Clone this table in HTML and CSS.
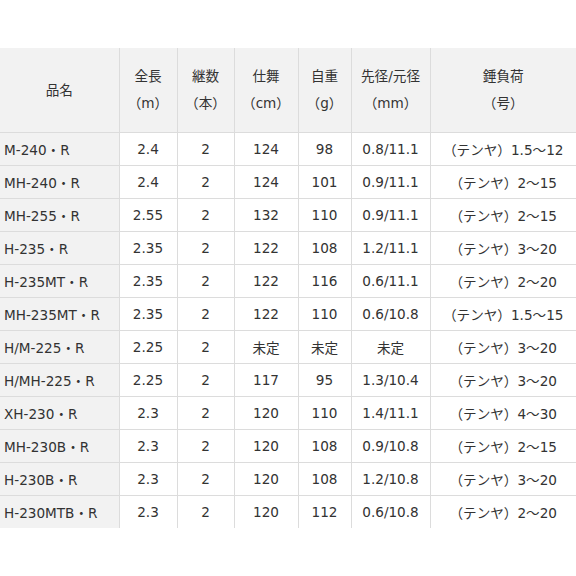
FILE: index.html
```html
<!DOCTYPE html>
<html lang="ja">
<head>
<meta charset="utf-8">
<link rel="stylesheet" href="styles.css">
</head>
<body>
<div class="wrap">
<table class="spec">
<colgroup>
<col class="c1"><col class="c2"><col class="c3"><col class="c4"><col class="c5"><col class="c6"><col class="c7">
</colgroup>
<thead>
<tr>
<th>品名</th>
<th>全長<br>（m）</th>
<th>継数<br>（本）</th>
<th>仕舞<br>（cm）</th>
<th>自重<br>（g）</th>
<th>先径/元径<br>（mm）</th>
<th>錘負荷<br>（号）</th>
</tr>
</thead>
<tbody>
<tr><td class="name">M-240・R</td><td>2.4</td><td>2</td><td>124</td><td>98</td><td>0.8/11.1</td><td>（テンヤ）1.5～12</td></tr>
<tr><td class="name">MH-240・R</td><td>2.4</td><td>2</td><td>124</td><td>101</td><td>0.9/11.1</td><td>（テンヤ）2～15</td></tr>
<tr><td class="name">MH-255・R</td><td>2.55</td><td>2</td><td>132</td><td>110</td><td>0.9/11.1</td><td>（テンヤ）2～15</td></tr>
<tr><td class="name">H-235・R</td><td>2.35</td><td>2</td><td>122</td><td>108</td><td>1.2/11.1</td><td>（テンヤ）3～20</td></tr>
<tr><td class="name">H-235MT・R</td><td>2.35</td><td>2</td><td>122</td><td>116</td><td>0.6/11.1</td><td>（テンヤ）2～20</td></tr>
<tr><td class="name">MH-235MT・R</td><td>2.35</td><td>2</td><td>122</td><td>110</td><td>0.6/10.8</td><td>（テンヤ）1.5～15</td></tr>
<tr><td class="name">H/M-225・R</td><td>2.25</td><td>2</td><td>未定</td><td>未定</td><td>未定</td><td>（テンヤ）3～20</td></tr>
<tr><td class="name">H/MH-225・R</td><td>2.25</td><td>2</td><td>117</td><td>95</td><td>1.3/10.4</td><td>（テンヤ）3～20</td></tr>
<tr><td class="name">XH-230・R</td><td>2.3</td><td>2</td><td>120</td><td>110</td><td>1.4/11.1</td><td>（テンヤ）4～30</td></tr>
<tr><td class="name">MH-230B・R</td><td>2.3</td><td>2</td><td>120</td><td>108</td><td>0.9/10.8</td><td>（テンヤ）2～15</td></tr>
<tr><td class="name">H-230B・R</td><td>2.3</td><td>2</td><td>120</td><td>108</td><td>1.2/10.8</td><td>（テンヤ）3～20</td></tr>
<tr><td class="name">H-230MTB・R</td><td>2.3</td><td>2</td><td>120</td><td>112</td><td>0.6/10.8</td><td>（テンヤ）2～20</td></tr>
</tbody>
</table>
</div>
</body>
</html>
```
FILE: styles.css
```css
html, body {
  margin: 0;
  padding: 0;
  background: #fff;
}
.wrap {
  padding-top: 48px;
  width: 576px;
  overflow: hidden;
}
.spec {
  width: 576px;
  table-layout: fixed;
  border-collapse: collapse;
  font-family: "DejaVu Sans", "Noto Sans CJK JP", sans-serif;
  font-size: 13.6px;
  color: #333;
}
.c1 { width: 119px; }
.c2 { width: 58px; }
.c3 { width: 57px; }
.c4 { width: 64px; }
.c5 { width: 53px; }
.c6 { width: 79px; }
.c7 { width: 146px; }
.spec th, .spec td {
  border: 1px solid #dcdcdc;
  padding: 0;
  text-align: center;
  white-space: nowrap;
  font-weight: normal;
}
.spec tr > :first-child { border-left: none; }
.spec tr > :last-child { border-right: none; }
.spec thead th {
  background: #f2f2f2;
  height: 84px;
  line-height: 27px;
  border-top: none;
}
.spec tbody td {
  height: 32px;
}
.spec tbody tr:last-child td { border-bottom: none; }
.spec td.name {
  background: #f2f2f2;
  text-align: left;
  padding-left: 4px;
}
```
